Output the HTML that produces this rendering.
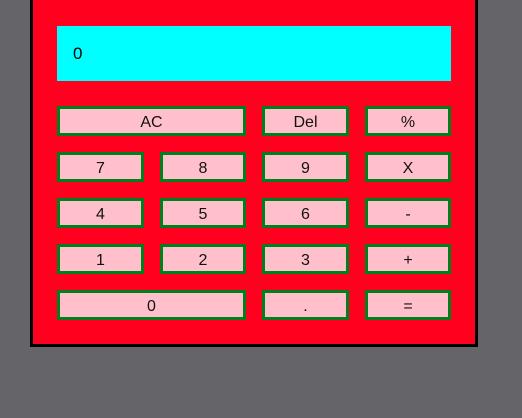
<!DOCTYPE html>
<html><head><style>
*{margin:0;padding:0;box-sizing:border-box}
body{width:522px;height:418px;background:#646469;position:relative;overflow:hidden;font-family:"Liberation Sans",sans-serif}
.calc{position:absolute;left:30px;top:-3px;width:448px;height:350px;background:#ff001f;border:3px solid #000}
.disp{position:absolute;left:57px;top:26px;width:394px;height:55px;background:#00ffff;font-size:17px;padding-left:16px;line-height:55px;color:#000}
.b{position:absolute;height:30px;background:#ffc0cb;border:3px solid #007f1f;font-size:16px;text-align:center;line-height:27px;color:#111}
</style></head><body>
<div class="calc"></div>
<div class="disp">0</div>
<div class="b" style="left:57px;top:106px;width:189px">AC</div>
<div class="b" style="left:262px;top:106px;width:87px">Del</div>
<div class="b" style="left:365px;top:106px;width:86px">%</div>
<div class="b" style="left:57px;top:152px;width:87px">7</div>
<div class="b" style="left:160px;top:152px;width:86px">8</div>
<div class="b" style="left:262px;top:152px;width:87px">9</div>
<div class="b" style="left:365px;top:152px;width:86px">X</div>
<div class="b" style="left:57px;top:198px;width:87px">4</div>
<div class="b" style="left:160px;top:198px;width:86px">5</div>
<div class="b" style="left:262px;top:198px;width:87px">6</div>
<div class="b" style="left:365px;top:198px;width:86px">-</div>
<div class="b" style="left:57px;top:244px;width:87px">1</div>
<div class="b" style="left:160px;top:244px;width:86px">2</div>
<div class="b" style="left:262px;top:244px;width:87px">3</div>
<div class="b" style="left:365px;top:244px;width:86px">+</div>
<div class="b" style="left:57px;top:290px;width:189px">0</div>
<div class="b" style="left:262px;top:290px;width:87px">.</div>
<div class="b" style="left:365px;top:290px;width:86px">=</div>
</body></html>
